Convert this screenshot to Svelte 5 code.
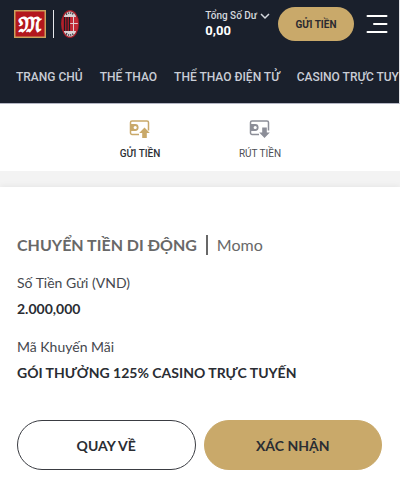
<script>
  let activeTab = 'deposit';

  const navLinks = ['TRANG CHỦ', 'THỂ THAO', 'THỂ THAO ĐIỆN TỬ', 'CASINO TRỰC TUYẾN'];

  const tabs = [
    { id: 'deposit', label: 'GỬI TIỀN', arrow: 'M15.5 8.5 20.8 14h-3v5h-4.6v-5h-3z' },
    { id: 'withdraw', label: 'RÚT TIỀN', arrow: 'M13.2 8.5h4.6v5h3L15.5 19l-5.3-5.5h3z' }
  ];

  const details = [
    { label: 'Số Tiền Gửi (VND)', value: '2.000,000' },
    { label: 'Mã Khuyến Mãi', value: 'GÓI THƯỞNG 125% CASINO TRỰC TUYẾN' }
  ];
</script>

<header class="header">
  <div class="top-bar">
    <a class="brand" href="#home" aria-label="M88">
      <svg class="logo" viewBox="0 0 32 28" aria-hidden="true">
        <rect width="32" height="28" fill="#c9a25c" />
        <rect x="1.5" y="1.5" width="29" height="25" fill="#b3171d" />
        <text x="16" y="21" text-anchor="middle" class="logo-letter">𝔐</text>
      </svg>
      <span class="brand-divider"></span>
      <svg class="crest" viewBox="0 0 18 28" aria-hidden="true">
        <ellipse cx="9" cy="14" rx="9" ry="14" fill="#a51d28" />
        <ellipse cx="9" cy="14" rx="7.6" ry="12.6" fill="#d9d2d3" />
        <path d="M5 4.5q4-3 8 0M5 23.5q4 3 8 0" fill="none" stroke="#3b3840" stroke-width="1.6" stroke-dasharray="1.2 1" />
        <path d="M2 7h14q2 7 0 14H2q-2-7 0-14z" fill="#b11d29" />
        <path d="M3.5 7v14M6 7v14M8.5 7v14" stroke="#1d1a23" stroke-width="1.2" />
        <path d="M9.2 7H16q2 7 0 14H9.2z" fill="#c22a36" />
        <path d="M12.5 7v14M9.2 13.5h7.6" stroke="#e3cccf" />
      </svg>
    </a>

    <div class="account">
      <button class="balance">
        <span class="balance-label">
          Tổng Số Dư
          <svg width="10" height="8" viewBox="0 0 10 8" aria-hidden="true">
            <path d="M1 2l4 4 4-4" fill="none" stroke="currentColor" stroke-width="1.5" />
          </svg>
        </span>
        <span class="balance-value">0,00</span>
      </button>
      <button class="deposit-btn">GỬI TIỀN</button>
      <button class="menu-btn" aria-label="Menu">
        <svg width="22" height="20" viewBox="0 0 22 20" aria-hidden="true">
          <path d="M1.5 2h19M8 10h12.5M1.5 18h19" stroke="#fff" stroke-width="2" stroke-linecap="round" />
        </svg>
      </button>
    </div>
  </div>

  <nav class="nav">
    {#each navLinks as link}
      <a href="#nav">{link}</a>
    {/each}
  </nav>
</header>

<div class="tabs">
  {#each tabs as tab}
    <button class="tab" class:active={activeTab === tab.id} on:click={() => (activeTab = tab.id)}>
      <svg width="22" height="20" viewBox="0 0 22 20" aria-hidden="true">
        <path d="M10 15.5H3A1.5 1.5 0 0 1 1.5 14V3.5A1.5 1.5 0 0 1 3 2h15a1.5 1.5 0 0 1 1.5 1.5v8" fill="none" stroke="currentColor" stroke-width="1.5" />
        <path d="M1.5 5H6v7H1.5z" fill="currentColor" />
        <circle cx="6.2" cy="8.5" r="2.5" fill="#fff" stroke="currentColor" stroke-width="1.8" />
        <path d={tab.arrow} fill="currentColor" />
      </svg>
      <span>{tab.label}</span>
    </button>
  {/each}
</div>

<main class="card">
  <h1 class="title">
    CHUYỂN TIỀN DI ĐỘNG
    <span class="method">Momo</span>
  </h1>

  <dl class="details">
    {#each details as item}
      <dt>{item.label}</dt>
      <dd>{item.value}</dd>
    {/each}
  </dl>

  <div class="actions">
    <button class="action">QUAY VỀ</button>
    <button class="action primary">XÁC NHẬN</button>
  </div>
</main>

<style>
  :global(body) {
    background-color: #fff;
    font-family: Lato, sans-serif;
    overflow-x: hidden;
  }

  button {
    padding: 0;
    border: none;
    background: none;
    font-family: inherit;
    cursor: pointer;
  }

  svg {
    display: block;
  }

  .header {
    background-color: #1a202c;
    border-right: 1px solid #e4e6ea;
    border-bottom: 1px solid #b4b6c4;
    font-family: Roboto, sans-serif;
  }

  .top-bar {
    display: flex;
    justify-content: space-between;
    align-items: center;
    height: 48px;
    padding: 0 11px 0 14px;
  }

  .brand {
    display: flex;
    align-items: center;
    gap: 7px;
  }

  .logo {
    width: 32px;
    height: 28px;
  }

  .logo-letter {
    fill: #fff;
    stroke: #fff;
    stroke-width: 1px;
    font-family: "DejaVu Math TeX Gyre", "DejaVu Sans", serif;
    font-size: 19px;
  }

  .brand-divider {
    width: 1px;
    height: 28px;
    background-color: #e6e8ec;
  }

  .crest {
    width: 18px;
    height: 28px;
  }

  .account {
    display: flex;
    align-items: center;
  }

  .balance {
    display: flex;
    flex-direction: column;
    margin-right: 8px;
    padding-bottom: 2px;
    color: #fff;
    text-align: left;
  }

  .balance-label {
    display: flex;
    align-items: center;
    gap: 3px;
    color: #d5d8de;
    font-size: 10px;
    font-weight: 500;
    line-height: 15px;
  }

  .balance-value {
    font-size: 13px;
    font-weight: 700;
    line-height: 15px;
  }

  .deposit-btn {
    width: 76px;
    height: 34px;
    margin-right: 12px;
    border-radius: 17px;
    background-color: #c9a96a;
    color: #2b2b30;
    font-size: 10px;
    font-weight: 700;
  }

  .nav {
    display: flex;
    gap: 17px;
    height: 55px;
    padding-left: 16px;
    overflow: hidden;
    white-space: nowrap;
  }

  .nav a {
    color: #c9cdd6;
    font-size: 12px;
    font-weight: 500;
    line-height: 58px;
    text-decoration: none;
  }

  .tabs {
    display: flex;
    justify-content: center;
    height: 67px;
    border-bottom: 16px solid #f3f3f3;
  }

  .tab {
    display: flex;
    flex-direction: column;
    align-items: center;
    gap: 6px;
    width: 120px;
    padding-top: 15px;
    color: #8c8e98;
    font-family: Roboto, sans-serif;
    font-size: 10px;
    line-height: 18px;
  }

  .tab span {
    color: #4c4e54;
  }

  .tab.active {
    color: #c9a96a;
    font-weight: 500;
  }

  .tab.active span {
    color: #2d2f34;
  }

  .card {
    padding: 46px 18px 24px 17px;
    background-color: #fff;
    box-shadow: 0 -1px 6px rgba(0, 0, 0, 0.06);
    color: #2a2d33;
  }

  .title {
    display: flex;
    align-items: center;
    gap: 9px;
    margin: 0 0 13px;
    color: #686868;
    font-size: 16px;
    font-weight: 700;
    line-height: 24px;
  }

  .method {
    padding-left: 9px;
    border-left: 2px solid #686868;
    font-weight: 400;
    line-height: 20px;
  }

  .details {
    margin: 0;
    font-size: 14px;
  }

  .details dt {
    color: #45484e;
    line-height: 26px;
  }

  .details dd {
    margin: 0 0 12px;
    font-weight: 700;
    line-height: 26px;
  }

  .actions {
    display: flex;
    gap: 8px;
    margin-top: 34px;
  }

  .action {
    flex: 1;
    height: 50px;
    border: 1px solid #3a3c42;
    border-radius: 25px;
    background-color: #fff;
    color: #2a2d33;
    font-size: 14px;
    font-weight: 700;
  }

  .action.primary {
    border-color: #c9a96a;
    background-color: #c9a96a;
  }
</style>
